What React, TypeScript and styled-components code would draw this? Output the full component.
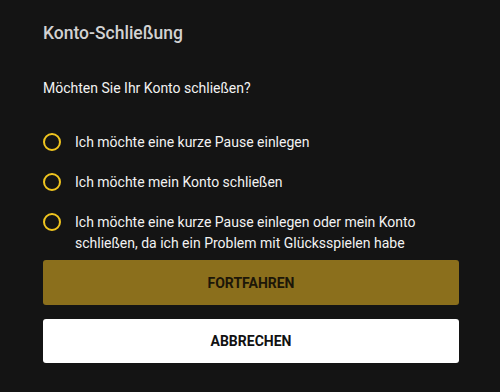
import React from "react";
import styled, { createGlobalStyle } from "styled-components";

const Global = createGlobalStyle`
  html, body { margin: 0; padding: 0; background: #141414; }
  body { font-family: Roboto, "Noto Sans", sans-serif; }
`;

const Page = styled.div`
  width: 500px;
  height: 392px;
  box-sizing: border-box;
  padding: 21px 41px 0 43px;
  background: #141414;
  display: flex;
  flex-direction: column;
`;

const Title = styled.h1`
  margin: 0;
  font-size: 17.5px;
  line-height: 24px;
  font-weight: 500;
  color: #d2d2d2;
`;

const Question = styled.p`
  margin: 32px 0 0;
  font-size: 14px;
  line-height: 22px;
  color: #f2f2f2;
`;

const Options = styled.div`
  margin-top: 33px;
  display: flex;
  flex-direction: column;
  gap: 19px;
`;

const Option = styled.label`
  display: flex;
  align-items: flex-start;
  gap: 14px;
  cursor: pointer;
`;

const Circle = styled.span`
  flex: none;
  width: 18px;
  height: 18px;
  box-sizing: border-box;
  border: 2px solid #f0c51f;
  border-radius: 50%;
  margin-top: 1px;
`;

const OptionText = styled.span`
  font-size: 14px;
  line-height: 21px;
  color: #f2f2f2;
  max-width: 384px;
`;

const Buttons = styled.div`
  margin-top: 6px;
  display: flex;
  flex-direction: column;
  gap: 14px;
`;

const Button = styled.button<{ $primary?: boolean }>`
  height: ${(p) => (p.$primary ? 45 : 44)}px;
  width: 100%;
  border: none;
  border-radius: 3px;
  background: ${(p) => (p.$primary ? "#8b6f1c" : "#ffffff")};
  color: ${(p) => (p.$primary ? "#1c1608" : "#111111")};
  font-family: Roboto, "Noto Sans", sans-serif;
  font-weight: 700;
  font-size: 14px;
  letter-spacing: 0;
  text-transform: uppercase;
  cursor: pointer;
`;

const options = [
  "Ich möchte eine kurze Pause einlegen",
  "Ich möchte mein Konto schließen",
  "Ich möchte eine kurze Pause einlegen oder mein Konto schließen, da ich ein Problem mit Glücksspielen habe",
];

export default function App() {
  return (
    <>
      <Global />
      <Page>
        <Title>Konto-Schließung</Title>
        <Question>Möchten Sie Ihr Konto schließen?</Question>
        <Options>
          {options.map((o) => (
            <Option key={o}>
              <Circle />
              <OptionText>{o}</OptionText>
            </Option>
          ))}
        </Options>
        <Buttons>
          <Button $primary>Fortfahren</Button>
          <Button>Abbrechen</Button>
        </Buttons>
      </Page>
    </>
  );
}
